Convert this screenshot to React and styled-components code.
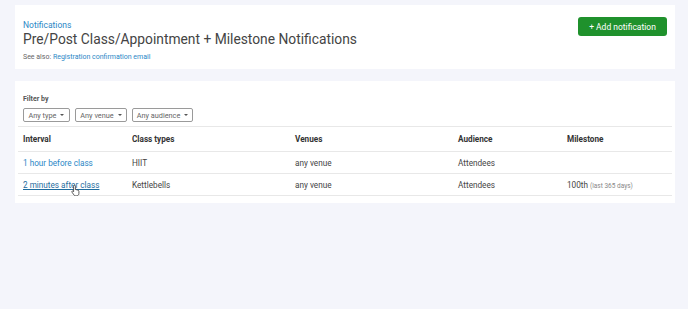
import React from "react";
import styled, { createGlobalStyle } from "styled-components";

const GlobalStyle = createGlobalStyle`
  body {
    margin: 0;
    background: #f4f5fb;
    font-family: Roboto, "Liberation Sans", sans-serif;
    color: #444;
  }
`;

const Page = styled.div`
  padding: 5px 13px 0 15px;
  display: flex;
  flex-direction: column;
  gap: 12px;
  width: 660px;
`;

const Card = styled.div`
  background: #ffffff;
  padding: ${(p) => p.pad || "8px"};
`;

const HeaderRow = styled.div`
  display: flex;
  justify-content: space-between;
  align-items: flex-start;
`;

const Crumb = styled.a`
  display: block;
  font-size: 8.5px;
  color: #2b87c6;
  margin-top: 15px;
  line-height: 11px;
`;

const Title = styled.h1`
  margin: -1px 0 0;
  font-size: 13.8px;
  font-weight: 400;
  color: #444;
  line-height: 18px;
`;

const SeeAlso = styled.div`
  font-size: 7px;
  color: #666;
  margin-top: 4px;
  line-height: 10px;
  a {
    color: #2b87c6;
  }
`;

const AddButton = styled.button`
  margin-top: 12px;
  background: #1f912c;
  color: #fff;
  border: none;
  border-radius: 3px;
  font-family: Roboto, "Liberation Sans", sans-serif;
  font-size: 8.5px;
  height: 19px;
  width: 89px;
  padding: 0;
  cursor: pointer;
`;

const FilterLabel = styled.div`
  font-size: 7px;
  font-weight: 700;
  color: #555;
  margin-top: 7px;
  line-height: 10px;
`;

const Filters = styled.div`
  display: flex;
  gap: 5px;
  margin-top: 4px;
`;

const FilterButton = styled.button`
  height: 14px;
  padding: 0;
  border: 1px solid #9a9a9a;
  border-radius: 2px;
  background: #fff;
  color: #666;
  font-family: Roboto, "Liberation Sans", sans-serif;
  font-size: 7.3px;
  white-space: nowrap;
  width: ${(p) => p.w}px;
  display: flex;
  align-items: center;
  justify-content: center;
  gap: 4px;
`;

const Caret = styled.span`
  width: 0;
  height: 0;
  border-left: 2.5px solid transparent;
  border-right: 2.5px solid transparent;
  border-top: 2.5px solid #555;
`;

const Table = styled.table`
  width: calc(100% + 10px);
  table-layout: fixed;
  margin: 4px -5px 0;
  border-collapse: collapse;
  font-size: 8.2px;
  color: #444;
`;

const Th = styled.th`
  text-align: left;
  font-weight: 700;
  color: #333;
  height: 24px;
  padding: 0 5px;
  border-top: 1px solid #e8e8e8;
  border-bottom: 1px solid #e8e8e8;
`;

const Td = styled.td`
  height: 21px;
  padding: 0 5px;
  border-bottom: 1px solid #e8e8e8;
  white-space: nowrap;
  position: relative;
`;

const Link = styled.a`
  text-decoration: ${(p) => (p.hover ? "underline" : "none")};
  color: ${(p) => (p.hover ? "#1f6c9e" : "#2b87c6")};
`;

const Muted = styled.span`
  font-size: 6.5px;
  color: #888;
`;

const Pointer = styled.svg`
  position: absolute;
  left: 53px;
  top: 10px;
`;

const rows = [
  { interval: "1 hour before class", types: "HIIT", venue: "any venue", audience: "Attendees", milestone: null },
  { interval: "2 minutes after class", types: "Kettlebells", venue: "any venue", audience: "Attendees", milestone: "100th", hover: true },
];

export default function App() {
  return (
    <>
      <GlobalStyle />
      <Page>
        <Card pad="0 8px 7px 8px">
          <HeaderRow>
            <div>
              <Crumb>Notifications</Crumb>
              <Title>Pre/Post Class/Appointment + Milestone Notifications</Title>
              <SeeAlso>
                See also: <a>Registration confirmation email</a>
              </SeeAlso>
            </div>
            <AddButton>+ Add notification</AddButton>
          </HeaderRow>
        </Card>
        <Card pad="6px 8px 7px 8px">
          <FilterLabel>Filter by</FilterLabel>
          <Filters>
            <FilterButton w={47}>Any type <Caret /></FilterButton>
            <FilterButton w={52}>Any venue <Caret /></FilterButton>
            <FilterButton w={61}>Any audience <Caret /></FilterButton>
          </Filters>
          <Table>
            <colgroup>
              <col style={{ width: 109 }} />
              <col style={{ width: 163 }} />
              <col style={{ width: 163 }} />
              <col style={{ width: 109 }} />
              <col />
            </colgroup>
            <thead>
              <tr>
                <Th>Interval</Th>
                <Th>Class types</Th>
                <Th>Venues</Th>
                <Th>Audience</Th>
                <Th>Milestone</Th>
              </tr>
            </thead>
            <tbody>
              {rows.map((r) => (
                <tr key={r.interval}>
                  <Td>
                    <Link hover={r.hover}>{r.interval}</Link>
                    {r.hover && (
                      <Pointer width="10" height="12" viewBox="0 0 10 12">
                        <path
                          d="M3.5 1.2c.5 0 .9.4.9.9v3.4l.4-.1c.5 0 .8.3.9.6.4-.2 1-.1 1.2.4.5-.1 1 .2 1 .8v2.3c0 1.3-1 2.3-2.3 2.3H4.6c-.7 0-1.3-.3-1.7-.9L1 8.2c-.3-.4-.2-.9.2-1.1.4-.2.8-.1 1.1.2l.3.4V2.1c0-.5.4-.9.9-.9z"
                          fill="#fff"
                          stroke="#333"
                          strokeWidth="0.8"
                        />
                      </Pointer>
                    )}
                  </Td>
                  <Td>{r.types}</Td>
                  <Td>{r.venue}</Td>
                  <Td>{r.audience}</Td>
                  <Td>
                    {r.milestone && (
                      <>
                        {r.milestone} <Muted>(last 365 days)</Muted>
                      </>
                    )}
                  </Td>
                </tr>
              ))}
            </tbody>
          </Table>
        </Card>
      </Page>
    </>
  );
}
